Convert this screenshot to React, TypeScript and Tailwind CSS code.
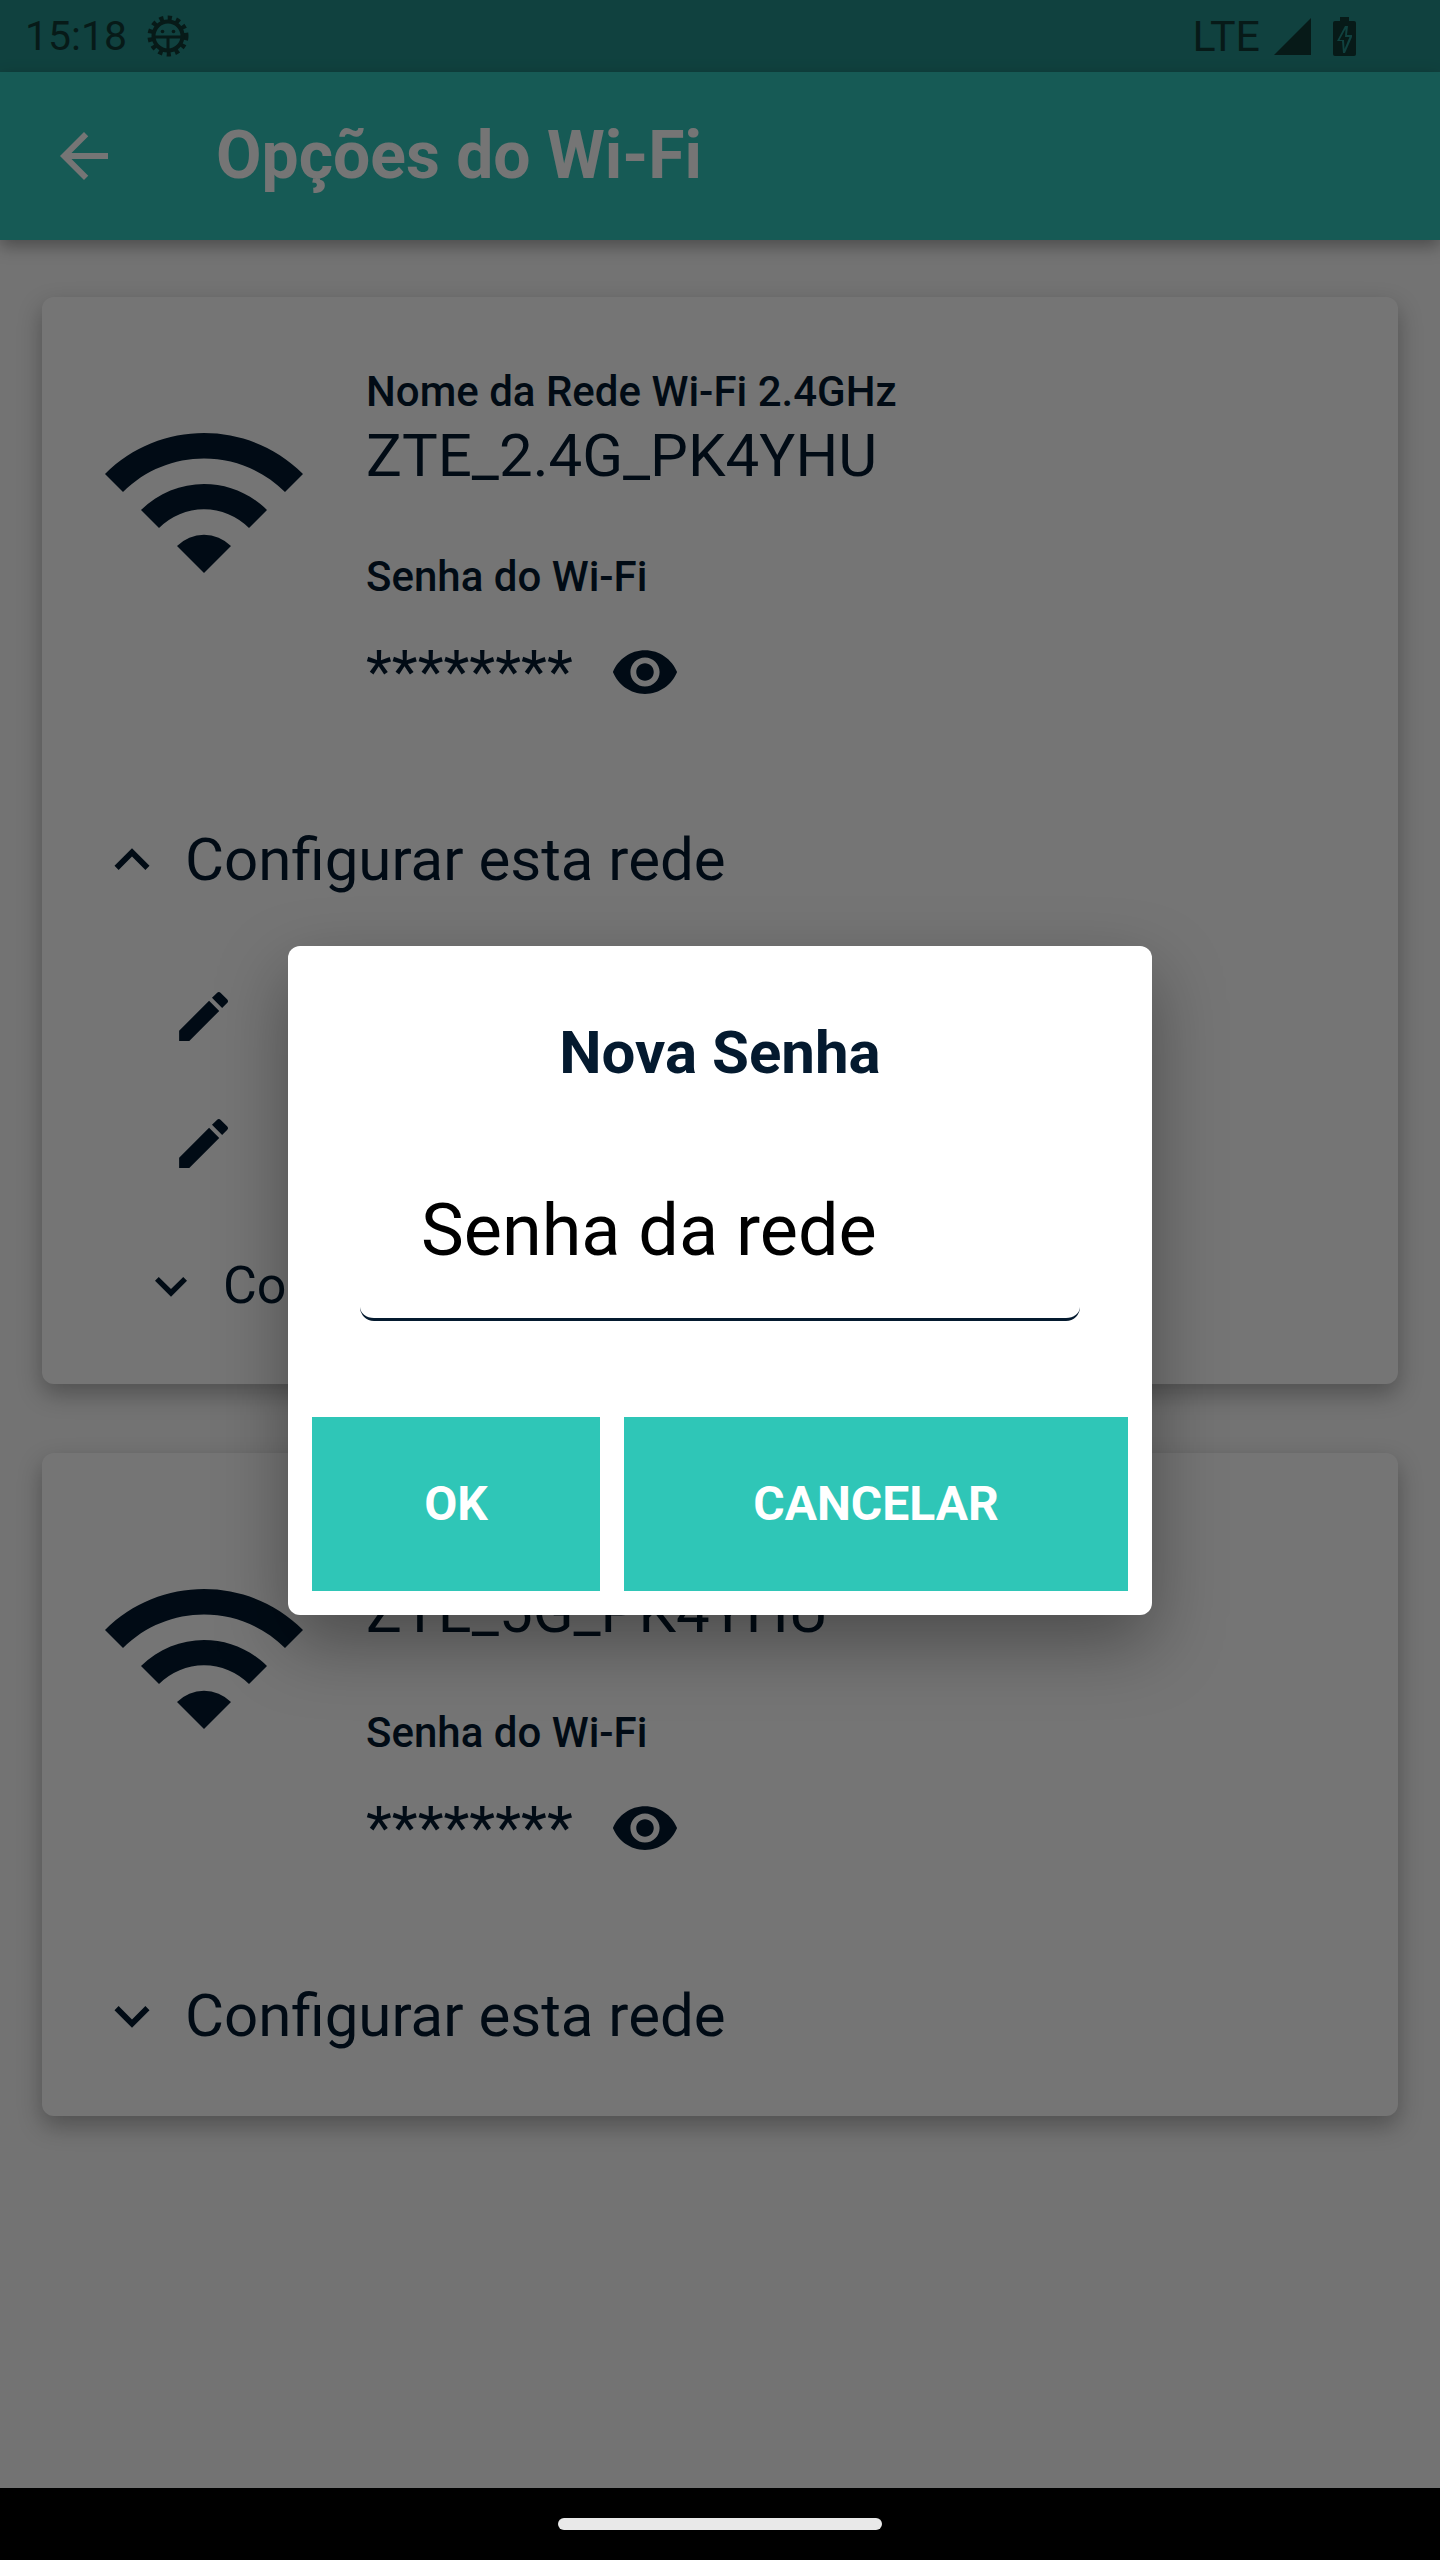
import React from 'react';
import {
  MdArrowBack,
  MdEdit,
  MdKeyboardArrowDown,
  MdKeyboardArrowUp,
  MdRemoveRedEye,
  MdWifi,
} from 'react-icons/md';

const GearBugIcon = () => (
  <svg viewBox="0 0 42 42" className="w-[42px] h-[42px]" fill="none" stroke="currentColor">
    <circle cx="21" cy="21" r="18" strokeWidth="5" strokeDasharray="4.2 4.2" />
    <circle cx="21" cy="21" r="14.5" strokeWidth="4" />
    <path d="M7 22h28M21 22v13" strokeWidth="3" />
    <circle cx="15.5" cy="16.5" r="1.8" fill="currentColor" stroke="none" />
    <circle cx="26.5" cy="16.5" r="1.8" fill="currentColor" stroke="none" />
  </svg>
);

const SignalIcon = () => (
  <svg viewBox="0 0 37 37" className="w-[37px] h-[37px]" fill="currentColor">
    <path d="M37 0v37H0z" />
  </svg>
);

const BatteryIcon = () => (
  <svg viewBox="0 0 23 39" className="w-[23px] h-[39px]" fill="currentColor">
    <path
      fillRule="evenodd"
      d="M7 0h9v4h5a2 2 0 0 1 2 2v31a2 2 0 0 1-2 2H2a2 2 0 0 1-2-2V6a2 2 0 0 1 2-2h5zM12 9l-8 15h5l1 12h2l7-16v-2h-5l1-9z"
    />
    <path d="M12.5 12 6.5 23h4.5l.5 9 5-12h-4.5z" />
  </svg>
);

function WifiCard({
  label,
  ssid,
  expanded,
}: {
  label: string;
  ssid: string;
  expanded?: boolean;
}) {
  return (
    <div className="bg-white rounded-[12px] shadow-[0_10px_24px_rgba(0,0,0,0.3)] pt-[72px] text-[#041a2f]">
      <div className="flex items-start pl-[54px] gap-[54px]">
        <MdWifi className="w-[216px] h-[216px] mt-[24px] shrink-0" />
        <div>
          <div className="text-[42px] leading-[45px] font-medium">{label}</div>
          <div className="text-[60px] leading-[62px] mt-[11px]">{ssid}</div>
          <div className="text-[42px] leading-[46px] font-medium mt-[67px]">Senha do Wi-Fi</div>
          <div className="flex items-center gap-[37px] mt-[37px] h-[70px]">
            <span className="text-[60px] leading-[62px]">********</span>
            <MdRemoveRedEye className="w-[70px] h-[70px]" />
          </div>
        </div>
      </div>

      <div className="flex items-center gap-[18px] pl-[55px] mt-[118px]">
        {expanded ? (
          <MdKeyboardArrowUp className="w-[70px] h-[70px]" />
        ) : (
          <MdKeyboardArrowDown className="w-[70px] h-[70px]" />
        )}
        <span className="text-[60px] leading-[70px]">Configurar esta rede</span>
      </div>

      {expanded ? (
        <div className="pb-[66px]">
          <div className="flex flex-col gap-[62px] pl-[129px] mt-[89px]">
            <MdEdit className="w-[65px] h-[65px]" />
            <MdEdit className="w-[65px] h-[65px]" />
          </div>
          <div className="flex items-center gap-[20px] pl-[97px] mt-[78px]">
            <MdKeyboardArrowDown className="w-[64px] h-[64px]" />
            <span className="text-[52px] leading-[64px]">Configurações</span>
          </div>
        </div>
      ) : (
        <div className="h-[65px]" />
      )}
    </div>
  );
}

export default function App() {
  return (
    <div className="relative w-full h-screen overflow-hidden bg-[#fafafa] font-['Roboto',sans-serif]">
      <div className="h-[72px] bg-[#238f89]" />
      <div className="h-[168px] bg-[#30c4b9] shadow-[0_6px_16px_rgba(0,0,0,0.35)] relative flex items-center text-white">
        <MdArrowBack className="w-[72px] h-[72px] ml-[48px]" />
        <h1 className="ml-[96px] text-[66px] leading-[80px] font-bold">Opções do Wi-Fi</h1>
      </div>

      <div className="flex flex-col gap-[69px] pt-[57px] px-[42px]">
        <WifiCard label="Nome da Rede Wi-Fi 2.4GHz" ssid="ZTE_2.4G_PK4YHU" expanded />
        <WifiCard label="Nome da Rede Wi-Fi 5GHz" ssid="ZTE_5G_PK4YHU" />
      </div>

      {/* modal barrier */}
      <div className="absolute inset-0 bg-black/54 flex items-center justify-center">
        <div className="w-[864px] bg-white rounded-[12px] shadow-[0_28px_70px_rgba(0,0,0,0.35)] px-[24px] pt-[70px] pb-[24px]">
          <h2 className="text-center text-[60px] leading-[70px] font-bold text-[#041a2f] mt-[2px]">
            Nova Senha
          </h2>
          <div className="mx-[48px] mt-[95px] h-[138px] pl-[61px] pt-[6px] border-b-[3px] border-[#041a2f] rounded-b-[14px] text-[72px] leading-[84px] text-black">
            Senha da rede
          </div>
          <div className="flex gap-[24px] mt-[96px]">
            <button className="w-[288px] h-[174px] bg-[#2fc6b7] text-white text-[48px] font-bold">OK</button>
            <button className="flex-1 h-[174px] bg-[#2fc6b7] text-white text-[48px] font-bold">CANCELAR</button>
          </div>
        </div>
      </div>

      {/* status bar icons stay above the barrier */}
      <div className="absolute top-0 inset-x-0 h-[72px] flex items-center pl-[25px] pr-[84px] text-[#071a18]">
        <span className="text-[41px] leading-none">15:18</span>
        <span className="ml-[20px]"><GearBugIcon /></span>
        <span className="ml-auto text-[43px] leading-none">LTE</span>
        <span className="ml-[14px]"><SignalIcon /></span>
        <span className="ml-[22px]"><BatteryIcon /></span>
      </div>

      <div className="absolute bottom-0 inset-x-0 h-[72px] bg-black flex justify-center pt-[30px]">
        <div className="w-[324px] h-[12px] rounded-[6px] bg-[#e9e9e9]" />
      </div>
    </div>
  );
}
